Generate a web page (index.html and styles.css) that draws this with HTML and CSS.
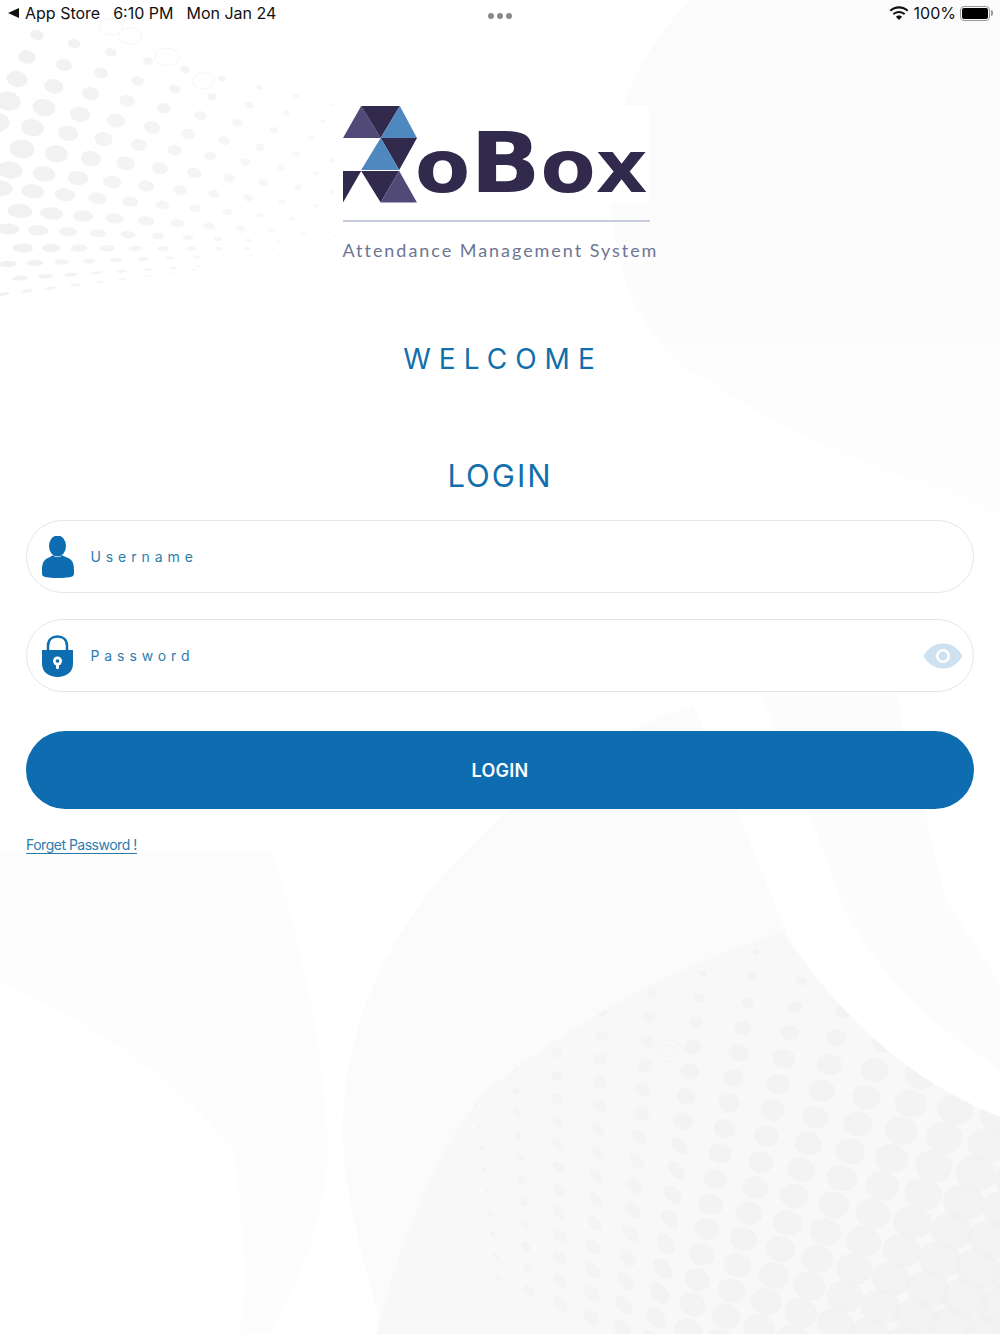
FILE: index.html
```html
<!DOCTYPE html>
<html>
	<head>
		<meta charset="utf-8">
		<title>RoBox Login</title>
		<link rel="stylesheet" href="styles.css">
	</head>
	<body>
		<div class="screen">
			<!-- faint background artwork, dots are added by background.js -->
			<svg class="backdrop" viewBox="0 0 1000 1334" aria-hidden="true">
				<defs>
					<clipPath id="fan-clip">
						<path d="M782 932C690 960 590 1010 487 1090C440 1140 400 1240 376 1334L1000 1334L1000 1117C920 1085 850 1030 782 932Z"/>
					</clipPath>
					<linearGradient id="fade-down" x1="0" y1="0" x2="0" y2="1">
						<stop offset="0" stop-color="#fbfbfc"/>
						<stop offset=".6" stop-color="#fcfcfd"/>
						<stop offset="1" stop-color="#fefefe"/>
					</linearGradient>
				</defs>
				<path fill="url(#fade-down)" d="M690 0C620 70 590 170 627 287C650 340 680 370 710 380C760 420 850 460 933 487L1000 520L1000 0Z"/>
				<path class="shade-0" d="M0 982L0 850L273 850C300 950 327 1050 327 1150C327 1220 300 1280 270 1334L240 1334C250 1270 240 1200 233 1150C190 1090 90 1020 0 982Z"/>
				<path class="shade-2" d="M693 705C560 750 343 900 343 1130C343 1190 360 1250 383 1334L1000 1334L1000 1117C920 1085 850 1030 790 940C760 870 730 790 693 705Z"/>
				<path class="shade-1" d="M760 693L897 693L903 730C915 770 925 810 946 900L1000 983L1000 1070C940 1030 880 985 841 900C830 865 800 790 760 693Z"/>
				<path class="shade-3" d="M782 932C690 960 590 1010 487 1090C440 1140 400 1240 376 1334L1000 1334L1000 1117C920 1085 850 1030 782 932Z"/>
				<g id="dots-top" class="dots"></g>
				<g id="dots-fan" class="dots" clip-path="url(#fan-clip)"></g>
				<g class="rings">
					<ellipse cx="111" cy="27" rx="12" ry="8"/>
					<ellipse cx="130" cy="36" rx="12" ry="8"/>
					<ellipse cx="167" cy="57" rx="12" ry="9"/>
					<ellipse cx="203" cy="81" rx="11" ry="8"/>
					<ellipse cx="668" cy="1051" rx="15" ry="11"/>
					<ellipse cx="668" cy="1051" rx="8" ry="6"/>
				</g>
			</svg>

			<div class="status-bar">
				<div class="status-left">
					<span class="back-arrow"></span>
					<span class="status-app">App Store</span>
					<span class="status-time">6:10 PM</span>
					<span>Mon Jan 24</span>
				</div>
				<div class="status-dots"><i></i><i></i><i></i></div>
				<div class="status-right">
					<svg class="wifi" viewBox="0 0 20 15">
						<path d="M10 2.4C13.1 2.4 15.9 3.6 18 5.6L19.4 4.1C16.9 1.6 13.6 .2 10 .2S3.100 1.600 .6 4.100L2 5.600C4.100 3.600 6.900 2.400 10 2.400Z"/>
						<path d="M10 7C11.900 7 13.600 7.700 14.900 8.900L16.300 7.400C14.600 5.900 12.400 4.900 10 4.900S5.400 5.900 3.700 7.400L5.100 8.900C6.400 7.700 8.100 7 10 7Z"/>
						<path d="M10 9.500C8.800 9.500 7.700 10 6.900 10.700L10 14L13.100 10.700C12.300 10 11.200 9.500 10 9.500Z"/>
					</svg>
					<span>100%</span>
					<span class="battery"><span class="battery-level"></span></span>
				</div>
			</div>

			<div class="brand">
				<div class="brand-logo">
					<svg class="brand-mark" viewBox="38 35 220 288">
						<polygon class="tri-purple" points="92,35 38,130 150,130"/>
						<polygon class="tri-dark" points="92,35 207,35 150,130"/>
						<polygon class="tri-blue" points="207,35 150,130 258,130"/>
						<polygon class="tri-dark" points="150,130 258,130 205,225"/>
						<polygon class="tri-blue" points="150,130 92,225 205,225"/>
						<polygon class="tri-dark" points="38,228 92,228 38,322"/>
						<polygon class="tri-dark" points="92,228 205,228 150,322"/>
						<polygon class="tri-purple" points="205,228 150,322 258,322"/>
					</svg>
					<span class="brand-word"><span class="word-low">o</span>B<span class="word-low">ox</span></span>
				</div>
				<div class="brand-line"></div>
				<div class="brand-tag">Attendance Management System</div>
			</div>

			<h2 class="welcome">WELCOME</h2>
			<h1 class="login-title">LOGIN</h1>

			<form class="login-form">
				<label class="field">
					<svg class="field-icon" viewBox="0 0 34 42">
						<ellipse cx="16.500" cy="10" rx="8.500" ry="10.500"/>
						<path d="M1 35C1 28 2 24 7 22C9 21 11 20 12 19C14 22 19 22 21 19C22 20 25 21 27 22C32 24 33 28 33 35C33 39 33 40 30 41C22 42.500 11 42.500 4 41C1 40 1 39 1 35Z"/>
					</svg>
					<input type="text" placeholder="Username">
				</label>
				<label class="field">
					<svg class="field-icon" viewBox="0 0 34 42">
						<path class="shackle" d="M7 16V11C7 5 11 1.500 16.500 1.500S26 5 26 11V16"/>
						<path d="M1 15H32V29C32 37 25 42 16.500 42S1 37 1 29Z"/>
						<circle class="keyhole" cx="16.500" cy="26" r="4.500"/>
						<rect class="keyhole" x="15" y="28" width="3" height="6" rx="1"/>
						<circle cx="16.500" cy="26" r="1.800"/>
					</svg>
					<input type="password" placeholder="Password">
					<svg class="eye" viewBox="0 0 40 26">
						<path class="eye-shape" d="M.5 13C5 5 12 .5 20 .5S35 5 39.500 13C35 21 28 25.500 20 25.500S5 21 .5 13Z"/>
						<circle class="eye-ring" cx="20" cy="13" r="7"/>
						<circle class="eye-shape" cx="20" cy="13" r="4.500"/>
					</svg>
				</label>
				<button class="login-btn" type="button">LOGIN</button>
				<a class="forget" href="javascript:;">Forget Password !</a>
			</form>
		</div>
		<script src="background.js"></script>
	</body>
</html>
```

FILE: styles.css
```css
*{
	margin:0;
	padding:0;
	box-sizing:border-box;
}
body{
	background:#fff;
	font-family:Inter,"Liberation Sans",sans-serif;
}
.screen{
	width:1000px;
	height:1334px;
	position:relative;
	overflow:hidden;
	background:#fff;
}
/* background artwork */
.backdrop{
	position:absolute;
	top:0;
	left:0;
	width:1000px;
	height:1334px;
}
.shade-0{fill:#fdfdfd;}
.shade-1{fill:#fcfcfc;}
.shade-2{fill:#fbfbfb;}
.shade-3{fill:#f8f8f8;}
.dots ellipse{fill:#eeeeee;}
.rings ellipse{
	fill:none;
	stroke:#f5f5f5;
	stroke-width:1;
}
/* status bar */
.status-bar{
	position:relative;
	height:26px;
	display:grid;
	grid-template-columns:1fr auto 1fr;
	align-items:center;
	padding:0 8px;
	font-size:16px;
	color:#111;
}
.status-left{
	display:flex;
	align-items:center;
}
.back-arrow{
	width:0;
	height:0;
	border-style:solid;
	border-width:5px 11px 5px 0;
	border-color:transparent #111 transparent transparent;
	margin-right:6px;
}
.status-app{margin-right:13px;}
.status-time{margin-right:13px;}
.status-dots{
	display:flex;
	gap:3px;
	padding-top:6px;
}
.status-dots i{
	width:6px;
	height:6px;
	border-radius:50%;
	background:#8a8a8a;
}
.status-right{
	display:flex;
	align-items:center;
	justify-content:flex-end;
}
.wifi{
	width:20px;
	height:15px;
	fill:#111;
	margin-right:5px;
}
.battery{
	width:30px;
	height:15px;
	margin:0 2px 0 4px;
	border:1px solid #999;
	border-radius:4px;
	padding:1px;
	position:relative;
}
.battery::after{
	content:"";
	position:absolute;
	top:3px;
	right:-4px;
	width:2px;
	height:6px;
	background:#999;
	border-radius:0 2px 2px 0;
}
.battery-level{
	display:block;
	height:100%;
	background:#000;
	border-radius:2px;
}
/* logo block */
.brand{
	position:relative;
	width:315px;
	margin:80px auto 0;
}
.brand-logo{
	width:306px;
	height:97px;
	display:flex;
	align-items:flex-end;
	background:#fff;
}
.brand-mark{
	width:74px;
	height:97px;
	align-self:flex-start;
	flex:none;
}
.tri-dark{fill:#322a4d;}
.tri-purple{fill:#514a78;}
.tri-blue{fill:#4f88bf;}
.brand-word{
	margin-left:-2px;
	margin-bottom:-5px;
	font-family:"DejaVu Sans",sans-serif;
	font-weight:bold;
	font-size:84px;
	line-height:82px;
	color:#322a4d;
	transform:scaleX(1.1);
	transform-origin:left bottom;
}
.word-low{font-size:73px;}
.brand-line{
	width:307px;
	height:2px;
	margin-top:17px;
	background:#c6cbde;
}
.brand-tag{
	margin-top:16px;
	font-family:Lato,sans-serif;
	font-size:18px;
	line-height:24px;
	letter-spacing:1.96px;
	color:#6d7594;
	white-space:nowrap;
}
/* headings */
.welcome,
.login-title{
	position:relative;
	text-align:center;
	font-weight:400;
	color:#116fab;
}
.welcome{
	margin-top:79px;
	padding-left:6px;
	font-size:28px;
	line-height:36px;
	letter-spacing:8px;
}
.login-title{
	margin-top:79px;
	font-size:31px;
	line-height:40px;
	letter-spacing:2px;
}
/* form */
.login-form{
	position:relative;
	margin-top:24px;
	padding:0 26px;
	display:flex;
	flex-direction:column;
}
.field{
	height:73px;
	margin-bottom:26px;
	padding:0 10px 0 13.500px;
	display:flex;
	align-items:center;
	background:#fff;
	border:1.500px solid #e6e6e6;
	border-radius:37px;
}
.field-icon{
	width:34px;
	height:42px;
	flex:none;
	fill:#0d6db0;
}
.shackle{
	fill:none;
	stroke:#0d6db0;
	stroke-width:2.500;
}
.keyhole{fill:#fff;}
.field input{
	flex:1;
	min-width:0;
	margin-left:16px;
	border:0;
	outline:0;
	background:transparent;
	font-family:Inter,"Liberation Sans",sans-serif;
	font-size:14px;
	letter-spacing:4.900px;
	color:#2e7cae;
}
.field input::placeholder{
	color:#2e7cae;
	opacity:1;
}
.eye{
	width:40px;
	height:26px;
	flex:none;
}
.eye-shape{fill:#cfe1ef;}
.eye-ring{fill:#fff;}
.login-btn{
	height:78px;
	margin-top:13px;
	border:0;
	border-radius:39px;
	background:#0d6db0;
	color:#fff;
	font-family:Inter,"Liberation Sans",sans-serif;
	font-size:18px;
	font-weight:600;
	letter-spacing:.3px;
}
.forget{
	align-self:flex-start;
	margin-top:27px;
	font-size:14px;
	line-height:17px;
	letter-spacing:-.5px;
	color:#2a7cac;
	text-decoration:none;
	border-bottom:1px solid #2a7cac;
}
```

FILE: background.js
```js
!function(){
	var ns='http://www.w3.org/2000/svg';

	function dot(group,x,y,rx,ry,angle,opacity){
		var e=document.createElementNS(ns,'ellipse');
		e.setAttribute('rx',rx.toFixed(1));
		e.setAttribute('ry',ry.toFixed(1));
		e.setAttribute('fill-opacity',opacity.toFixed(2));
		e.setAttribute('transform','translate('+x.toFixed(1)+' '+y.toFixed(1)+') rotate('+angle.toFixed(1)+')');
		group.appendChild(e);
	}

	// top left halftone: each row is x, y, step x, step y (read off the picture)
	var rows=[
		[37,35,37,8.7],[27,57,37,8],[17,79,36.700,7.300],[8,101,36,6.600],
		[-3,122,35.500,5.700],[22,149,34.500,4.800],[10,170,34,4],[0,188,32.500,3.400],
		[20,211,31.500,2.500],[8,229,30,1.400],[23,248,28,0.100],[8,264,27,-1],
		[20,278,25.500,-1.700],[3,294,24,-3]
	];
	var top=document.getElementById('dots-top');
	for(var j=0;j<rows.length;j++){
		var r=rows[j];
		var fade=j<3?0.55+j*0.15:(j>8?1-(j-8)*0.09:1);
		var flat=j<6?0.75:Math.max(0.25,0.75-(j-5)*0.065);
		for(var i=0;i<11;i++){
			var s=12.500*fade*(1-i/11.500);
			if(s<1)break;
			dot(top,r[0]+r[2]*i,r[1]+r[3]*i,s,Math.max(s*flat,0.7),Math.atan2(r[3],r[2])*180/Math.PI,0.3+0.5*(1-i/11));
		}
	}

	// bottom right fan, rows bend as they go down
	var fan=document.getElementById('dots-fan');
	for(var k=-4;k<=12;k++){
		var bx=874.700-8.200*k,by=1070+27*k;
		var dx=-45.500+1.220*k,dy=-5.700-0.600*k;
		for(var n=-5;n<=10;n++){
			var size=(12+(7-n)*3+k*0.8)/2.375;
			if(n<0)size+=-n*0.6;
			if(k<0)size*=1+k*0.17;
			if(n>7)size*=1-(n-7)*0.2;
			if(size<1)continue;
			var squash=(n>3&&k>3)?0.62:0.85;
			var tilt=(n>3&&k>3)?50:Math.atan2(dy,dx)*180/Math.PI+180;
			dot(fan,bx+dx*n,by+dy*n,size,size*squash,tilt,n>4?0.35:0.55);
		}
	}
}();
```
